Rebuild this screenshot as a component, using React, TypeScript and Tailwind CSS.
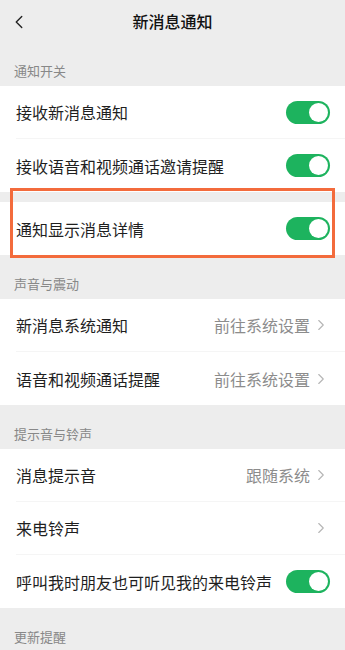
import { ChevronLeft, ChevronRight } from "lucide-react";

type Row = {
  label: string;
  toggle?: boolean;
  value?: string;
  arrow?: boolean;
};

type Section = {
  title: string;
  groups: Row[][];
};

const sections: Section[] = [
  {
    title: "通知开关",
    groups: [
      [{ label: "接收新消息通知", toggle: true }, { label: "接收语音和视频通话邀请提醒", toggle: true }],
      [{ label: "通知显示消息详情", toggle: true }],
    ],
  },
  {
    title: "声音与震动",
    groups: [
      [
        { label: "新消息系统通知", value: "前往系统设置", arrow: true },
        { label: "语音和视频通话提醒", value: "前往系统设置", arrow: true },
      ],
    ],
  },
  {
    title: "提示音与铃声",
    groups: [
      [
        { label: "消息提示音", value: "跟随系统", arrow: true },
        { label: "来电铃声", arrow: true },
        { label: "呼叫我时朋友也可听见我的来电铃声", toggle: true },
      ],
    ],
  },
  { title: "更新提醒", groups: [] },
];

function Toggle() {
  return (
    <div className="flex h-[23px] w-[44px] items-center justify-end rounded-full bg-[#1db35e] px-[2px]">
      <div className="h-[19px] w-[19px] rounded-full bg-white" />
    </div>
  );
}

function SettingRow({ row, last }: { row: Row; last: boolean }) {
  return (
    <div className="flex h-[53px] items-center pl-4">
      <div
        className={`flex h-full flex-1 items-center justify-between pr-[15px] ${last ? "" : "border-b border-[#f5f5f5]"}`}
      >
        <span className="text-[16px] text-[#1f1f1f]">{row.label}</span>
        <div className="flex items-center">
          {row.value && <span className="text-[16px] text-[#8c8c8c]">{row.value}</span>}
          {row.arrow && <ChevronRight className="ml-[2px] h-[18px] w-[18px] text-[#b5b5b5]" strokeWidth={1.5} />}
          {row.toggle && <Toggle />}
        </div>
      </div>
    </div>
  );
}

export default function App() {
  return (
    <div
      className="relative h-[650px] w-full overflow-hidden bg-[#ededed]"
      style={{ fontFamily: '"Noto Sans CJK SC", "Noto Sans", sans-serif' }}
    >
      <header className="relative flex h-[42px] items-center justify-center">
        <ChevronLeft className="absolute left-[8px] top-[11px] h-[22px] w-[22px] text-[#222]" strokeWidth={1.5} />
        <span className="text-[16px] font-medium text-[#111]">新消息通知</span>
      </header>

      {sections.map((section) => (
        <section key={section.title}>
          <div className="flex h-[44px] items-end pb-[6px] pl-[14px] text-[13px] text-[#888]">{section.title}</div>
          {section.groups.map((group, gi) => (
            <div key={gi} className={gi > 0 ? "mt-[10px] bg-white" : "bg-white"}>
              {group.map((row, ri) => (
                <SettingRow key={row.label} row={row} last={ri === group.length - 1} />
              ))}
            </div>
          ))}
        </section>
      ))}

      <div className="pointer-events-none absolute left-[10px] top-[188px] h-[70px] w-[325px] border-[3px] border-[#f36b3c]" />
    </div>
  );
}
